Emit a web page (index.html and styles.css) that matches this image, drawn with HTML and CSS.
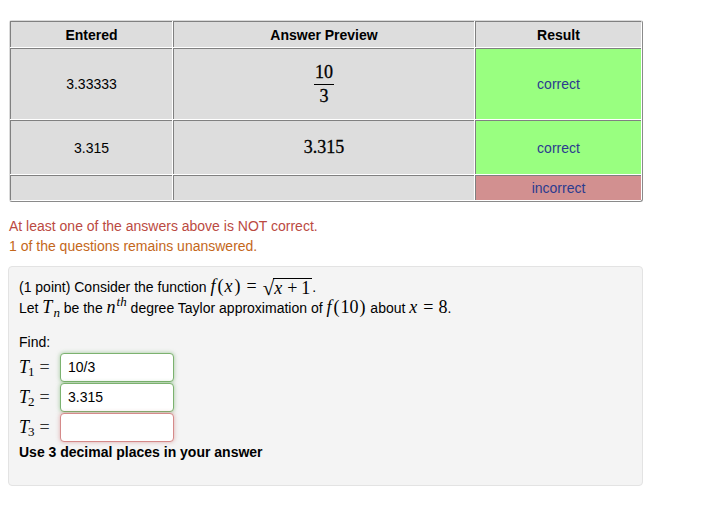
FILE: index.html
```html
<!DOCTYPE html>
<html lang="en">
<head>
<meta charset="utf-8">
<title>Problem</title>
<link rel="stylesheet" href="styles.css">
</head>
<body>
<div class="page">
  <div class="results">
    <div class="cell head">Entered</div>
    <div class="cell head">Answer Preview</div>
    <div class="cell head">Result</div>

    <div class="cell">3.33333</div>
    <div class="cell"><span class="frac"><span class="num">10</span><span class="den">3</span></span></div>
    <div class="cell ok">correct</div>

    <div class="cell">3.315</div>
    <div class="cell"><span class="mn big">3.315</span></div>
    <div class="cell ok">correct</div>

    <div class="cell"></div>
    <div class="cell"></div>
    <div class="cell bad">incorrect</div>
  </div>

  <div class="messages">
    <div class="msg-error">At least one of the answers above is NOT correct.</div>
    <div class="msg-warn">1 of the questions remains unanswered.</div>
  </div>

  <div class="well">
    <div class="line">(1 point) Consider the function <span class="math"><i class="mi">f</i><span class="mp">(</span><i class="mi">x</i><span class="mp">)</span><span class="rel">=</span><span class="sqrt"><span class="radix">√</span><span class="radicand"><i class="mi">x</i><span class="bin">+</span><span class="mn">1</span></span></span></span>.</div>
    <div class="line">Let <span class="math"><i class="mi">T</i><sub class="sub">n</sub></span> be the <span class="math"><i class="mi">n</i><sup class="sup">th</sup></span> degree Taylor approximation of <span class="math"><i class="mi">f</i><span class="mp">(</span><span class="mn">10</span><span class="mp">)</span></span> about <span class="math"><i class="mi">x</i><span class="rel">=</span><span class="mn">8</span></span>.</div>
    <div class="find">Find:</div>
    <div class="ansrow">
      <span class="label math"><i class="mi">T</i><sub class="sub up">1</sub><span class="rel">=</span></span>
      <input class="ans good" type="text" value="10/3">
    </div>
    <div class="ansrow">
      <span class="label math"><i class="mi">T</i><sub class="sub up">2</sub><span class="rel">=</span></span>
      <input class="ans good" type="text" value="3.315">
    </div>
    <div class="ansrow">
      <span class="label math"><i class="mi">T</i><sub class="sub up">3</sub><span class="rel">=</span></span>
      <input class="ans wrong" type="text" value="">
    </div>
    <div class="note">Use 3 decimal places in your answer</div>
  </div>
</div>
</body>
</html>
```

FILE: styles.css
```css
html, body {
  margin: 0;
  padding: 0;
  background: #ffffff;
}

body {
  font-family: "Liberation Sans", Arial, sans-serif;
  font-size: 14px;
  color: #000000;
}

.page {
  padding: 20px 0 0 9px;
  width: 634px;
}

.results {
  box-sizing: border-box;
  width: 634px;
  display: grid;
  grid-template-columns: 162px 301px 166px;
  grid-template-rows: 26px 71px 54px 25px;
  gap: 1px;
  padding: 0 1px 1px 0;
  background: #ffffff;
  border: 1px solid;
  border-color: #dadada #8a8a8a #8a8a8a #dadada;
  border-radius: 3px;
}

.cell {
  display: flex;
  align-items: center;
  justify-content: center;
  background: #dddddd;
  border-top: 1px solid #808080;
  border-left: 1px solid #808080;
}

.head {
  font-weight: bold;
}

.ok {
  background: #99ff80;
  color: #2b3b8f;
}

.bad {
  background: #d29090;
  color: #2b3b8f;
}

.frac {
  display: inline-flex;
  flex-direction: column;
  align-items: center;
  font-family: "Liberation Serif", "Times New Roman", serif;
  font-size: 18px;
  line-height: 19px;
  -webkit-text-stroke: 0.3px #000;
}

.num {
  padding: 0 1px 2px;
  border-bottom: 1px solid #000;
}

.den {
  padding-top: 2px;
}

.big {
  font-size: 18px;
  -webkit-text-stroke: 0.3px #000;
}

.mn {
  font-family: "Liberation Serif", "Times New Roman", serif;
}

.messages {
  margin-top: 14px;
  line-height: 20px;
}

.msg-error {
  color: #bb4a42;
}

.msg-warn {
  color: #c4671a;
}

.well {
  box-sizing: border-box;
  margin-top: 10px;
  width: 635px;
  height: 220px;
  margin-left: -1px;
  padding: 9px 10px 0 10px;
  background: #f4f4f4;
  border: 1px solid #e3e3e3;
  border-radius: 4px;
}

.line {
  height: 21px;
  line-height: 21px;
  white-space: nowrap;
}

.math {
  font-family: "Liberation Serif", "Times New Roman", serif;
  font-size: 18px;
  white-space: nowrap;
}

.mi {
  font-style: italic;
  padding-right: 1px;
}

.mp {
  padding: 0 1px;
}

.rel {
  margin: 0 5px;
}

.bin {
  margin: 0 4px;
}

.sqrt {
  display: inline-flex;
  align-items: flex-start;
  line-height: 18px;
  vertical-align: -3px;
}

.radix {
  font-size: 21px;
  line-height: 18px;
  padding-left: 1px;
  margin-top: 1px;
}

.radicand {
  border-top: 1px solid #000;
  padding: 0 2px 0 1px;
  margin-left: -1px;
}

.sub {
  font-size: 13px;
  font-style: italic;
  vertical-align: -4px;
  line-height: 0;
}

.sub.up {
  font-style: normal;
  margin-left: -2px;
  vertical-align: -3px;
}

.sup {
  font-size: 13px;
  font-style: italic;
  vertical-align: 7px;
  line-height: 0;
}

.find {
  margin-top: 14px;
  height: 20px;
  line-height: 20px;
}

.ansrow {
  display: flex;
  align-items: center;
  height: 30px;
}

.label {
  width: 41px;
  flex: none;
}

.label .rel {
  margin: 0 0 0 5px;
  color: #333;
}

.ans {
  box-sizing: border-box;
  width: 114px;
  height: 29px;
  margin: 0;
  padding: 0 7px;
  font-family: "Liberation Sans", Arial, sans-serif;
  font-size: 14px;
  color: #000;
  background: #ffffff;
  border: 1px solid;
  border-radius: 4px;
  outline: none;
}

.good {
  border-color: #7cb26f;
  box-shadow: 0 0 4px rgba(90, 160, 80, 0.55);
}

.wrong {
  border-color: #d58a8a;
  box-shadow: 0 0 4px rgba(200, 100, 100, 0.5);
}

.note {
  height: 20px;
  line-height: 20px;
  font-weight: bold;
}
```
